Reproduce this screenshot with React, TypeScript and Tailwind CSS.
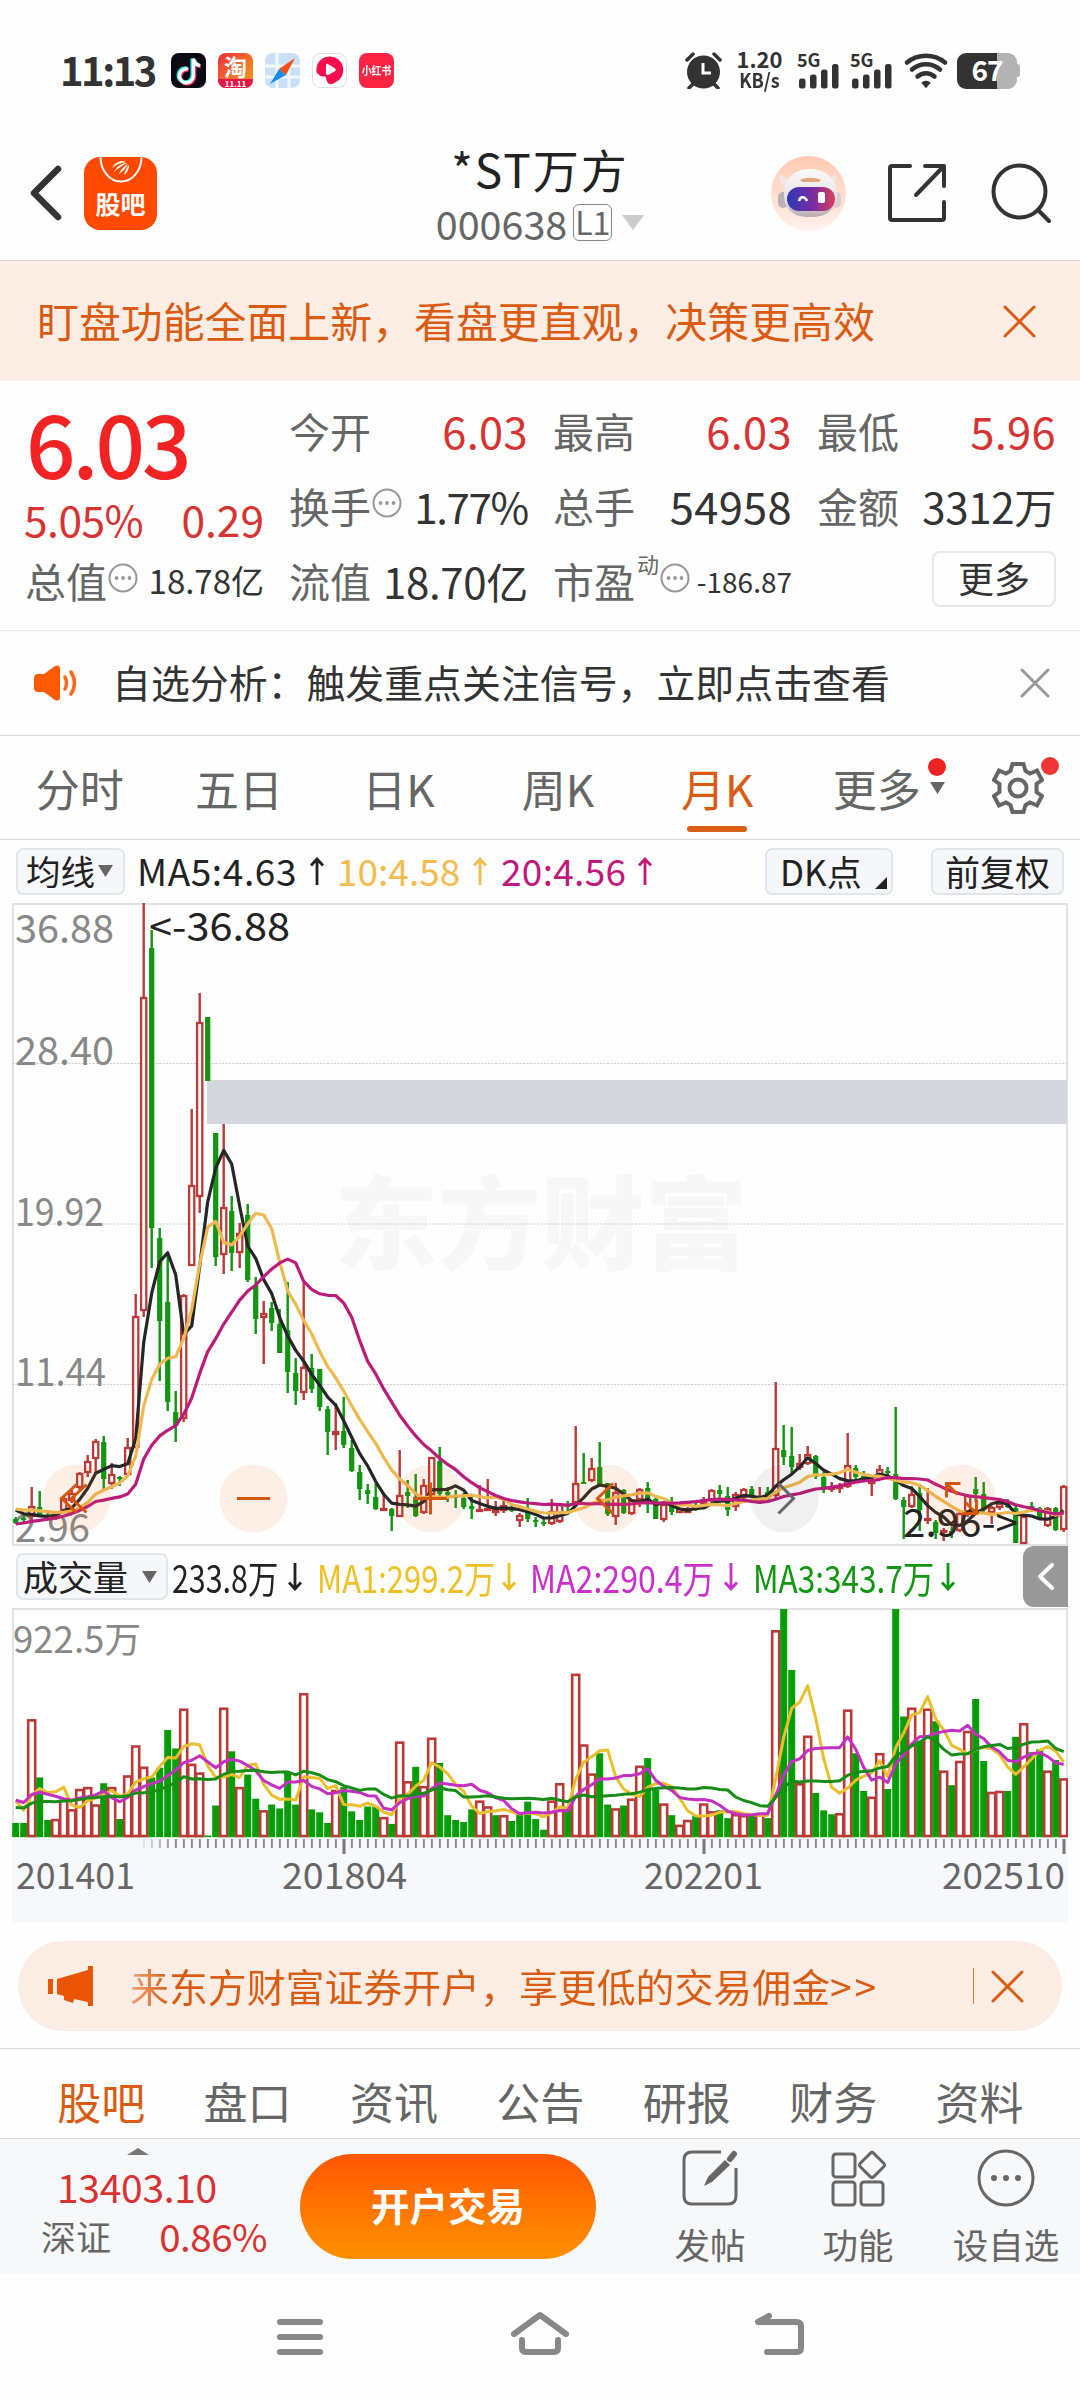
import type { ReactNode } from "react";

// [colour, high, body top, body bottom, low], in px from the top of the price pane
type Candle = ["r" | "g", number, number, number, number];

const candles: Candle[] = [
  ["g", 614, 616, 620, 621], ["g", 613, 615, 617, 619], ["r", 584, 603, 614, 617], ["g", 588, 604, 613, 614],
  ["g", 610, 612, 614, 616], ["r", 610, 613, 615, 617], ["r", 594, 595, 608, 610], ["r", 587, 590, 598, 600],
  ["r", 569, 570, 585, 587], ["r", 552, 558, 570, 574], ["r", 536, 538, 556, 570], ["g", 533, 539, 576, 586],
  ["r", 560, 571, 581, 586], ["g", 573, 574, 575, 583], ["r", 535, 544, 572, 574], ["r", 391, 413, 545, 545],
  ["r", 0, 94, 408, 414], ["g", 27, 45, 325, 365], ["g", 325, 335, 418, 478], ["g", 352, 399, 499, 508],
  ["g", 488, 509, 523, 539], ["r", 391, 392, 516, 519], ["r", 206, 282, 363, 363], ["r", 90, 119, 294, 310],
  ["g", 114, 114, 178, 178], ["g", 230, 230, 354, 363], ["r", 221, 304, 352, 371], ["g", 293, 308, 350, 368],
  ["r", 320, 330, 350, 365], ["g", 301, 312, 377, 379], ["g", 374, 382, 416, 431], ["r", 398, 410, 415, 461],
  ["g", 399, 405, 420, 428], ["g", 406, 421, 450, 450], ["g", 379, 427, 469, 490], ["g", 455, 470, 488, 502],
  ["r", 380, 464, 490, 497], ["g", 451, 465, 486, 490], ["g", 466, 466, 504, 508], ["g", 503, 506, 529, 552],
  ["r", 500, 528, 532, 547], ["g", 494, 528, 542, 545], ["g", 537, 545, 568, 569], ["g", 562, 569, 586, 597],
  ["g", 581, 587, 591, 601], ["g", 581, 594, 606, 607], ["r", 592, 605, 606, 608], ["g", 605, 606, 613, 628],
  ["r", 547, 592, 614, 614], ["g", 577, 589, 593, 605], ["g", 571, 594, 613, 614], ["r", 576, 582, 610, 611],
  ["r", 554, 554, 592, 594], ["g", 544, 558, 591, 594], ["g", 584, 589, 592, 599], ["g", 587, 592, 595, 605],
  ["g", 590, 595, 604, 606], ["g", 594, 603, 606, 616], ["r", 582, 606, 607, 608], ["r", 576, 605, 607, 608],
  ["r", 598, 606, 610, 613], ["r", 597, 602, 608, 610], ["g", 602, 604, 608, 609], ["r", 610, 612, 618, 624],
  ["g", 595, 605, 616, 619], ["g", 614, 617, 619, 624], ["g", 614, 619, 620, 623], ["r", 596, 608, 621, 622],
  ["r", 600, 601, 619, 620], ["g", 598, 602, 604, 609], ["r", 523, 580, 600, 600], ["g", 550, 579, 580, 580],
  ["r", 555, 565, 578, 579], ["g", 539, 564, 581, 582], ["g", 580, 580, 611, 613], ["r", 580, 589, 614, 622],
  ["g", 586, 587, 610, 611], ["r", 596, 597, 611, 612], ["r", 585, 586, 597, 604], ["g", 579, 585, 599, 610],
  ["g", 594, 596, 616, 616], ["r", 600, 601, 617, 619], ["g", 594, 599, 609, 612], ["r", 605, 605, 610, 610],
  ["r", 604, 605, 610, 610], ["g", 598, 602, 607, 608], ["r", 594, 599, 605, 606], ["r", 586, 587, 598, 599],
  ["g", 582, 587, 591, 600], ["g", 584, 593, 607, 613], ["r", 589, 591, 604, 608], ["r", 585, 586, 595, 596],
  ["g", 583, 586, 592, 594], ["r", 584, 597, 600, 601], ["g", 584, 589, 596, 598], ["r", 479, 545, 593, 596],
  ["g", 522, 547, 554, 562], ["g", 524, 553, 564, 570], ["r", 551, 560, 565, 567], ["r", 543, 551, 561, 562],
  ["g", 552, 553, 574, 576], ["g", 569, 574, 587, 590], ["r", 579, 584, 586, 589], ["r", 580, 582, 586, 590],
  ["r", 530, 562, 584, 585], ["g", 562, 565, 574, 577], ["g", 568, 573, 577, 579], ["r", 572, 577, 581, 593],
  ["r", 562, 566, 572, 573], ["g", 564, 568, 570, 573], ["g", 504, 571, 596, 597], ["g", 594, 597, 604, 636],
  ["r", 583, 591, 604, 605], ["g", 583, 590, 607, 628], ["r", 585, 615, 618, 621], ["g", 617, 619, 630, 636],
  ["r", 625, 627, 630, 638], ["g", 624, 628, 630, 635], ["r", 609, 610, 628, 629], ["r", 591, 592, 612, 614],
  ["g", 574, 586, 591, 599], ["g", 579, 591, 607, 609], ["r", 603, 604, 610, 621], ["r", 596, 600, 605, 607],
  ["g", 596, 599, 604, 605], ["g", 602, 605, 640, 640], ["r", 612, 613, 641, 641], ["g", 599, 603, 608, 609],
  ["g", 604, 605, 615, 617], ["r", 604, 605, 623, 624], ["g", 604, 605, 627, 628], ["r", 582, 583, 627, 629],
];

const volumes = [
  14, 14, 121, 61, 17, 18, 38, 28, 49, 51, 33, 55, 51, 18, 63, 94, 72, 61, 71, 110, 91, 132, 75, 66, 1, 32, 133, 88,
  51, 64, 39, 27, 33, 29, 66, 33, 148, 28, 25, 14, 48, 51, 26, 17, 31, 31, 20, 13, 98, 57, 72, 52, 102, 76, 22, 17,
  15, 28, 37, 31, 22, 22, 16, 25, 36, 18, 7, 37, 55, 29, 168, 95, 65, 86, 33, 29, 32, 39, 73, 81, 48, 34, 22, 12,
  17, 21, 34, 26, 27, 19, 23, 22, 22, 23, 19, 213, 235, 172, 55, 104, 45, 27, 23, 24, 131, 86, 47, 41, 86, 49, 235,
  124, 133, 99, 132, 119, 68, 53, 78, 109, 142, 78, 46, 47, 47, 103, 117, 87, 90, 68, 79, 60,
];

// volume bars are coloured by the previous close, so they can differ from the candle
const volumeColors =
  "ggrggrrrrrrgrgrrrggggrrrggrgrggrggggrgggrgggggrgrrgrrgggggrrgrgggggrrgrrrggrgrrggrgrrgrrggrrgrgrggrrgggrrggrrgggrgrgrgrrggrrggrggrgr";

// months before the visible window, so the averages start at the left edge
const closeHistory = [...Array(10).fill(636), ...Array(5).fill(605), 598, 600, 606, 611];
const volumeHistory = [...Array(10).fill(22.5), ...Array(5).fill(38), 64, 43, 26, 38];

const STEP = 8;
const barX = (i: number) => 3.7 + i * STEP;

function average(history: number[], values: number[], n: number) {
  const all = [...history, ...values];
  return values.map((_, i) => {
    const end = i + history.length + 1;
    return all.slice(end - n, end).reduce((a, b) => a + b, 0) / n;
  });
}

const toPoints = (ys: number[]) => ys.map((y, i) => `${barX(i)},${y.toFixed(1)}`).join(" ");

const closes = candles.map(([c, , top, bottom]) => (c === "r" ? top : bottom));
const volY = (v: number) => 228.5 - v * 0.968;

const RED = "#b93a38";
const GREEN = "#109610";

function Cross({ size, className, stroke = 3 }: { size: number; className: string; stroke?: number }) {
  return (
    <svg width={size} height={size} viewBox={`0 0 ${size} ${size}`} className={className} stroke="currentColor" strokeWidth={stroke} strokeLinecap="round">
      <path d={`M2 2L${size - 2} ${size - 2}M${size - 2} 2L2 ${size - 2}`} />
    </svg>
  );
}

function InfoDots() {
  return (
    <svg width="30" height="30" viewBox="0 0 30 30" className="shrink-0 -mt-[6px] ml-px">
      <circle cx="15" cy="15" r="13.5" fill="none" stroke="#999" strokeWidth="2" />
      <g fill="#999">
        <circle cx="8.5" cy="15" r="1.9" />
        <circle cx="15" cy="15" r="1.9" />
        <circle cx="21.5" cy="15" r="1.9" />
      </g>
    </svg>
  );
}

function Down({ w, h, className }: { w: number; h: number; className: string }) {
  return (
    <svg width={w} height={h} viewBox="0 0 10 10" preserveAspectRatio="none" className={className} fill="currentColor">
      <path d="M0 0H10L5 10Z" />
    </svg>
  );
}

function Arrow({ up = false, className }: { up?: boolean; className?: string }) {
  return (
    <svg width="14" height="28" viewBox="0 0 14 28" fill="none" stroke="currentColor" strokeWidth="2.800" className={className}>
      <path d={up ? "M7 28V2M1 8.5L7 2L13 8.5" : "M7 0V26M1 19.5L7 26L13 19.5"} />
    </svg>
  );
}

function Signal() {
  return (
    <div className="flex h-[37px] w-[44px] flex-col justify-between">
      <span className="text-[18px] leading-[14px] font-bold">5G</span>
      <svg width="41" height="25" viewBox="0 0 41 25" fill="#333" className="-mt-1 ml-[2px]">
        <rect x="0" y="14.500" width="6.500" height="10" rx="2.500" />
        <rect x="11" y="10.500" width="6.500" height="14" rx="2.500" />
        <rect x="22" y="5.500" width="6.500" height="19" rx="2.500" />
        <rect x="33" y="0" width="6.500" height="24.500" rx="2.500" />
      </svg>
    </div>
  );
}

function StatusBar() {
  return (
    <div className="flex h-[126px] items-center pt-[15px] pr-[60px] pl-[60px] text-[#333]">
      <span className="w-[111px] text-[40px] leading-none font-bold tracking-[-2.500px] -mt-1">11:13</span>
      <div className="flex items-center gap-[12px]">
        <svg width="35" height="35" viewBox="0 0 35 35">
          <rect width="35" height="35" rx="8" fill="#0b0a14" />
          <g fill="none" strokeWidth="4">
            <path d="M17 16a7 7 0 1 0 5.500 7V6c1 4 3 6 6.500 6.500" stroke="#fe2c55" transform="translate(.8 .8)" />
            <path d="M17 16a7 7 0 1 0 5.500 7V6c1 4 3 6 6.500 6.500" stroke="#25f4ee" transform="translate(-1 -.6)" />
            <path d="M17 16a7 7 0 1 0 5.500 7V6c1 4 3 6 6.500 6.500" stroke="#fff" strokeWidth="3.200" />
          </g>
        </svg>
        <div className="flex h-[35px] w-[35px] flex-col items-center rounded-[8px] bg-linear-to-br from-[#e8243c] via-[#f06a28] to-[#f5a01c] text-white">
          <span className="text-[23px] leading-[26px] font-bold">淘</span>
          <span className="w-full rounded-b-[8px] bg-[#e5174a] text-center text-[8px] leading-[9px] font-bold">11.11</span>
        </div>
        <svg width="35" height="35" viewBox="0 0 35 35">
          <rect width="35" height="35" rx="8" fill="#c9e0f8" />
          <path d="M12 0V35M0 13H35M24 14V35M0 24H35" stroke="#f3f8fe" strokeWidth="3" />
          <path d="M30 5L14 16L21 22Z" fill="#f4511e" />
          <path d="M5 31L14 16L21 22Z" fill="#1b8df0" />
        </svg>
        <svg width="35" height="35" viewBox="0 0 35 35">
          <rect x=".5" y=".5" width="34" height="34" rx="8" fill="#fff" stroke="#ddd" />
          <path d="M18 3.500a13.500 13.500 0 0 1 5 26c-3 2.500-7 2-8-1l-1.500-5C8 24 3.500 21 4.500 15 5.500 8 11 3.500 18 3.500Z" fill="#f80e4c" />
          <path d="M14 12.500c0-1.500 1-2 2-1.500l7 4.500c1 .8 1 2 0 2.700L16 22c-1 .5-2 0-2-1.500Z" fill="#fff" />
        </svg>
        <div className="flex h-[35px] w-[35px] items-center justify-center rounded-[8px] bg-[#fb2442]">
          <span className="scale-x-90 text-[11px] leading-none font-bold whitespace-nowrap text-white">小红书</span>
        </div>
      </div>
      <div className="ml-auto flex items-center">
        <svg width="37" height="37" viewBox="0 0 37 37" className="mr-[14px]">
          <circle cx="18.500" cy="20" r="16.500" fill="#333" />
          <path d="M2 8L8 2M35 8L29 2M4 36L8 32M33 36L29 32" stroke="#333" strokeWidth="3.500" strokeLinecap="round" />
          <path d="M18 11V21H26" stroke="#fff" strokeWidth="3" fill="none" />
        </svg>
        <div className="flex w-[47px] flex-col items-center text-[22px] leading-[21px] font-bold">
          <span className="-mt-1">1.20</span>
          <span className="scale-x-90 text-[20px]">KB/s</span>
        </div>
        <div className="ml-[14px] flex gap-[9px]">
          <Signal />
          <Signal />
        </div>
        <svg width="44" height="36" viewBox="0 0 44 36" className="ml-[10px]" fill="none" stroke="#333" strokeWidth="4.500" strokeLinecap="round">
          <path d="M3 9.500C14 .5 30 .5 41 9.500" />
          <path d="M8 16.500C16 9.500 28 9.500 36 16.500" />
          <path d="M13.500 23.500C18.500 19 25.500 19 30.500 23.500" />
          <path d="M19.500 30C21 29 23 29 24.500 30L22 33Z" fill="#333" strokeWidth="3" />
        </svg>
        <div className="ml-[9px] flex items-center">
          <div className="flex h-[36px] w-[60px] items-center justify-center rounded-[9px] bg-linear-to-r from-[#333] from-66% to-[#b3b3b3] to-66%">
            <span className="text-[28px] leading-none font-bold tracking-[-1px] text-white -mt-1">67</span>
          </div>
          <div className="h-[13px] w-[3px] rounded-r bg-[#b3b3b3]" />
        </div>
      </div>
    </div>
  );
}

function Header() {
  return (
    <header className="grid h-[135px] grid-cols-[1fr_auto_1fr] items-center border-b border-[#d5d5d8]">
      <div className="flex items-center pl-[30px]">
        <svg width="32" height="56" viewBox="0 0 32 56" fill="none" stroke="#333" strokeWidth="6.500" strokeLinecap="round" strokeLinejoin="round">
          <path d="M28 4L4 28L28 52" />
        </svg>
        <div className="relative ml-[22px] flex h-[73px] w-[73px] items-end justify-center overflow-hidden rounded-[16px] bg-[#ff4800] pb-[14px]">
          <svg width="44" height="27" viewBox="0 0 44 27" className="absolute top-0 left-[15px]">
            <path d="M1.500 0a20 24 0 0 0 41 0" fill="none" stroke="#fff" strokeWidth="2" />
            <path d="M13 11C17 4 23 3 27 5C20 6 17 8 13 11ZM15 15C18 9 23 6 28 6C23 9 19 11 15 15ZM20 17C22 12 25 9 29 7C27 11 24 14 20 17ZM25 18C26 14 28 10 30 8C30 12 28 16 25 18Z" fill="#fff" />
          </svg>
          <span className="text-[25px] leading-none font-bold text-white">股吧</span>
        </div>
      </div>
      <div className="flex flex-col items-center pt-[3px]">
        <h1 className="text-[46px] leading-[56px] tracking-[2px] text-[#222]">*ST万方</h1>
        <div className="flex items-center text-[#666]">
          <span className="text-[39.500px] leading-[54px]">000638</span>
          <span className="ml-[6px] flex h-[37px] w-[39px] items-center justify-center rounded-[6px] border border-[#888] pb-1 text-[32px] leading-none">L1</span>
          <Down w={22} h={15} className="ml-[10px] text-[#ccc]" />
        </div>
      </div>
      <div className="flex items-center justify-end pr-[29px]">
        <svg width="75" height="75" viewBox="0 0 75 75" className="mr-[42px]">
          <defs>
            <linearGradient id="halo" x1="0" y1="0" x2="0" y2="1">
              <stop offset="0" stopColor="#ffc9b0" />
              <stop offset="1" stopColor="#fff2ec" />
            </linearGradient>
            <linearGradient id="visor" x1="0" y1="0" x2="1" y2="0">
              <stop offset="0" stopColor="#3038b8" />
              <stop offset=".55" stopColor="#7a2ca0" />
              <stop offset="1" stopColor="#d8405c" />
            </linearGradient>
            <linearGradient id="helmet" x1="0" y1="0" x2="0" y2="1">
              <stop offset="0" stopColor="#fbf9fa" />
              <stop offset=".7" stopColor="#e6dfe2" />
              <stop offset="1" stopColor="#b5a8b0" />
            </linearGradient>
          </defs>
          <circle cx="37.500" cy="37.500" r="37.500" fill="url(#halo)" />
          <path d="M9 17C8 24 10 30 16 32L22 23C16 24 12 21 9 17ZM64 17C66 24 64 30 58 32L52 23C58 24 62 21 64 17Z" fill="#eee8ea" />
          <rect x="7" y="36" width="10" height="16" rx="5" fill="#b9b0b8" />
          <rect x="61" y="36" width="9" height="16" rx="5" fill="#d9cdd0" />
          <path d="M13 38C13 20 26 13 39 13C54 13 66 23 66 38C66 54 56 61 39 61C22 61 13 54 13 38Z" fill="url(#helmet)" />
          <path d="M29 24C35 21 44 21 50 24L48 26H31Z" fill="#dfa77c" />
          <rect x="16" y="31" width="48" height="24" rx="12" fill="url(#visor)" />
          <path d="M28 45C29 40 34 40 36 45" fill="none" stroke="#fff" strokeWidth="2.500" />
          <rect x="47" y="36" width="7" height="11" rx="2" fill="#fff" />
        </svg>
        <svg width="58" height="58" viewBox="0 0 58 58" className="mr-[45px]" fill="none" stroke="#333" strokeWidth="4" strokeLinecap="round" strokeLinejoin="round">
          <path d="M22 2H4Q2 2 2 4V54Q2 56 4 56H54Q56 56 56 54V38" />
          <path d="M37 2H56V22M55 3L28 31" />
        </svg>
        <svg width="60" height="60" viewBox="0 0 60 60" fill="none" stroke="#333" strokeWidth="4" strokeLinecap="round">
          <circle cx="28.500" cy="28.500" r="26" />
          <path d="M47 47L58 58" />
        </svg>
      </div>
    </header>
  );
}

function Stat({ label, value, up, info, size }: { label: ReactNode; value: string; up?: boolean; info?: boolean; size?: string }) {
  return (
    <div className="flex h-[75px] items-center whitespace-nowrap">
      <span className="-ml-px text-[41px] text-[#666]">{label}</span>
      {info && <InfoDots />}
      <span className={`ml-auto ${size ?? "text-[43.500px] tracking-[0.300px]"} ${up ? "text-[#d63333]" : "text-[#333]"}`}>{value}</span>
    </div>
  );
}

function Quote() {
  return (
    <section className="grid h-[250px] grid-cols-[repeat(4,238px)] gap-x-[26px] border-b border-[#ececee] pt-[12px] pl-[26px] leading-none">
      <div>
        <div className="h-[102px] text-[87px] leading-[96px] font-medium tracking-[-3px] text-[#f32323]">6.03</div>
        <div className="-ml-[2px] flex h-[48px] items-center justify-between text-[42.500px] text-[#d63333]">
          <span className="tracking-[-0.500px]">5.05%</span>
          <span>0.29</span>
        </div>
        <Stat label="总值" value="18.78亿" info size="text-[33px]" />
      </div>
      <div>
        <Stat label="今开" value="6.03" up />
        <Stat label="换手" value="1.77%" info size="text-[42px] tracking-[-1.300px]" />
        <Stat label="流值" value="18.70亿" size="text-[42px] tracking-[-0.300px]" />
      </div>
      <div>
        <Stat label="最高" value="6.03" up />
        <Stat label="总手" value="54958" />
        <Stat label={<>市盈<sup className="relative -top-[25px] ml-[2px] text-[22px]">动</sup></>} value="-186.87" info size="text-[28px]" />
      </div>
      <div>
        <Stat label="最低" value="5.96" up />
        <Stat label="金额" value="3312万" size="text-[42px] tracking-[-0.300px]" />
        <div className="flex h-[72px] items-center justify-end">
          <button className="h-[56px] w-[124px] rounded-[8px] border-2 border-[#e6e8eb] pb-1 text-[36px] leading-none text-[#333]">更多</button>
        </div>
      </div>
    </section>
  );
}

function PeriodTabs() {
  return (
    <nav className="flex h-[104px] border-b border-[#d8d8da] text-[44px] leading-none text-[#666]">
      {["分时", "五日", "日K", "周K", "月K", "更多"].map((tab) => (
        <div key={tab} className={tab === "月K" ? "relative w-[159.400px] pt-[30px] text-center text-[#d95c12]" : "relative w-[159.400px] pt-[30px] text-center"}>
          {tab}
          {tab === "月K" && <span className="absolute bottom-[7px] left-[49px] h-[6px] w-[60px] rounded-full bg-[#d95f16]" />}
          {tab === "更多" && (
            <>
              <span className="absolute top-[22px] left-[131px] h-[18px] w-[18px] rounded-full bg-[#f02323]" />
              <Down w={15} h={12} className="absolute top-[46px] left-[133px]" />
            </>
          )}
        </div>
      ))}
      <div className="relative flex-1">
        <svg width="52" height="54" viewBox="-26 -27 52 54" className="absolute top-[25px] left-[36px]" fill="none" stroke="#666" strokeWidth="4" strokeLinejoin="miter">
          <path d="M-5.500 -24H5.500L7.500 -17L12 -14.500L19 -17.500L24 -8L18.500 -4V4L24 8L19 17.500L12 14.500L7.500 17L5.500 24H-5.500L-7.500 17L-12 14.500L-19 17.500L-24 8L-18.500 4V-4L-24 -8L-19 -17.500L-12 -14.500L-7.500 -17Z" />
          <circle r="8.500" />
        </svg>
        <span className="absolute top-[21px] left-[85px] h-[18px] w-[18px] rounded-full bg-[#f23535]" />
      </div>
    </nav>
  );
}

const chip = "flex h-[47px] shrink-0 items-center rounded-[7px] border-2 border-[#e2e5ea] bg-[#f6f7fa] text-[#222]";

function MaLegend() {
  return (
    <div className="flex h-[63px] items-center pb-px pl-[16px] text-[37px] leading-none text-[#222]">
      <div className={`${chip} w-[109px] pl-[8px]`}>
        <span className="-mt-[2px] text-[34.500px]">均线</span>
        <Down w={15} h={12} className="ml-[3px] text-[#666]" />
      </div>
      <span className="-mt-[2px] ml-[12px] w-[173px] tracking-[0.600px]">MA5:4.63</span>
      <Arrow up className="mr-[13px]" />
      <span className="-mt-[2px] w-[136px] text-[#f3bc50]">10:4.58</span>
      <Arrow up className="mr-[14px] text-[#f3bc50]" />
      <span className="-mt-[2px] w-[137px] tracking-[0.300px] text-[#c0187c]">20:4.56</span>
      <Arrow up className="text-[#c0187c]" />
      <div className={`${chip} relative ml-[113px] w-[128px] pl-[13px]`}>
        <span className="-mt-[2px] text-[35px]">DK点</span>
        <svg width="12" height="12" viewBox="0 0 12 12" className="absolute right-[4px] bottom-[4px]">
          <path d="M12 0V12H0Z" fill="#222" />
        </svg>
      </div>
      <div className={`${chip} ml-[38px] w-[133px] justify-center`}>
        <span className="-mt-[2px] text-[35px]">前复权</span>
      </div>
    </div>
  );
}

function ChartButton({ children, muted }: { children: ReactNode; muted?: boolean }) {
  return (
    <svg width="69" height="69" viewBox="-34.5 -34.5 69 69" fill="none" stroke={muted ? "#666" : "#d4560f"} strokeWidth="3">
      <circle r="34" fill={muted ? "#333" : "#fa6414"} fillOpacity={muted ? 0.07 : 0.1} stroke="none" />
      {children}
    </svg>
  );
}

function PriceChart() {
  const labels: [string, number, number][] = [
    ["36.88", 39.5, 99],
    ["28.40", 162, 99],
    ["19.92", 322.5, 89],
    ["11.44", 483, 91],
    ["2.96", 639, 75],
  ];
  return (
    <div className="relative mx-[12px] h-[642px]">
      <svg width="1056" height="642" viewBox="0 0 1056 642" className="block overflow-visible">
        <rect x="1" y="1" width="1054" height="641" fill="none" stroke="#e2e2e5" strokeWidth="2" />
        <text x="322" y="359" fontSize="102" fontWeight="900" fill="#f7f7f8" textLength="414" lengthAdjust="spacingAndGlyphs">东方财富</text>
        <path d="M0 160.500H1056M0 321H1056M0 481.500H1056" stroke="#ccc" strokeDasharray="2 1.500" />
        <rect x="195" y="177" width="860" height="44" fill="#d4d7dc" />
        {labels.map(([t, y, w]) => (
          <text key={t} x="3" y={y} fontSize="39.500" fill="#888" textLength={w} lengthAdjust="spacingAndGlyphs">{t}</text>
        ))}
        {candles.map(([c, high, top, bottom, low], i) => {
          const x = barX(i);
          const h = Math.max(bottom - top, 2);
          return c === "g" ? (
            <g key={i} fill={GREEN}>
              <rect x={x - 1.2} y={high} width="2.4" height={low - high} />
              <rect x={x - 2.6} y={top} width="5.2" height={h} />
            </g>
          ) : (
            <g key={i} fill={RED}>
              <rect x={x - 1.2} y={high} width="2.4" height={top - high} />
              <rect x={x - 1.2} y={bottom} width="2.4" height={low - bottom} />
              <rect x={x - 2.6} y={top + 1} width="5.2" height={Math.max(h - 2, 1)} fill="#fff" fillOpacity=".8" stroke={RED} strokeWidth="2.300" />
            </g>
          );
        })}
        <g fill="none" strokeWidth="3.200" strokeLinejoin="round">
          <polyline points={toPoints(average(closeHistory, closes, 5))} stroke="#262626" />
          <polyline points={toPoints(average(closeHistory, closes, 10))} stroke="#f0b950" />
          <polyline points={toPoints(average(closeHistory, closes, 20))} stroke="#bb1c7c" />
        </g>
        <g fontSize="39" fill="#222">
          <text x="137" y="37.500" textLength="141" lengthAdjust="spacingAndGlyphs">&lt;-36.88</text>
          <text x="891" y="634" textLength="115" lengthAdjust="spacingAndGlyphs">2.96-&gt;</text>
        </g>
      </svg>
      <div className="absolute top-[561px] left-[30px] flex gap-[108px]">
        <ChartButton>
          <path d="M0 -14L-15 0L0 14M10 -14L-5 0L10 14" />
        </ChartButton>
        <ChartButton>
          <path d="M-16.500 0H16.500" />
        </ChartButton>
        <ChartButton>
          <path d="M-16.500 0H16.500M0 -16V16" />
        </ChartButton>
        <ChartButton>
          <path d="M5.500 -15L-10 0L5.500 15" />
        </ChartButton>
        <ChartButton muted>
          <path d="M-6 -15L9 0L-6 15" />
        </ChartButton>
        <ChartButton>
          <path d="M-1 -15H-15V-1M-15 -15L-4 -4M15 1V15H1M15 15L4 4" />
        </ChartButton>
      </div>
    </div>
  );
}

function VolumeLegend() {
  return (
    <div className="flex h-[63px] items-center pl-[16px] text-[38px] leading-none text-[#222]">
      <div className={`${chip} w-[152px] pl-[5px]`}>
        <span className="-mt-[2px] text-[35px]">成交量</span>
        <Down w={15} h={12} className="ml-[14px] text-[#666]" />
      </div>
      <span className="ml-[4px] w-[116px]"><span className="-mt-[3px] inline-block origin-left scale-x-[.8] whitespace-nowrap">233.8万</span></span>
      <Arrow />
      <span className="ml-[15px] w-[185px] text-[#f0c022]"><span className="-mt-[3px] inline-block origin-left scale-x-[.815] whitespace-nowrap">MA1:299.2万</span></span>
      <Arrow className="text-[#f0c022]" />
      <span className="ml-[14px] w-[194px] text-[#cb2fcb]"><span className="-mt-[3px] inline-block origin-left scale-x-[.845] whitespace-nowrap">MA2:290.4万</span></span>
      <Arrow className="text-[#cb2fcb]" />
      <span className="ml-[15px] w-[188px] text-[#109610]"><span className="-mt-[3px] inline-block origin-left scale-x-[.83] whitespace-nowrap">MA3:343.7万</span></span>
      <Arrow className="text-[#109610]" />
      <div className="mr-[12px] ml-auto flex h-[61px] w-[45px] items-center justify-center rounded-l-[11px] bg-[#999]">
        <svg width="18" height="29" viewBox="0 0 18 29" fill="none" stroke="#fff" strokeWidth="4" strokeLinecap="round" strokeLinejoin="round">
          <path d="M15 3L3 14.500L15 26" />
        </svg>
      </div>
    </div>
  );
}

function VolumeChart() {
  const vma = (n: number) => toPoints(average(volumeHistory, volumes, n).map(volY));
  return (
    <div className="mx-[12px] h-[315px] bg-linear-to-b from-white from-[231px] to-[#f7f8fb] to-[231px]">
      <svg width="1056" height="315" viewBox="0 0 1056 315" className="block">
        <path d="M1 230V1H1055V230" fill="none" stroke="#e2e2e5" strokeWidth="2" />
        <path d="M0 229.500H1056" stroke="#d4ecd4" />
        <text x="1" y="44.500" fontSize="36.500" fill="#888" textLength="128" lengthAdjust="spacingAndGlyphs">922.5万</text>
        {volumes.map((v, i) => {
          const y = volY(v);
          return volumeColors[i] === "g" ? (
            <rect key={i} x={barX(i) - 3.5} y={y} width="7" height={229 - y} fill="#069c06" />
          ) : (
            <rect key={i} x={barX(i) - 3.5} y={y + 1} width="7" height={227 - y} fill="#fff" stroke={RED} strokeWidth="2.600" />
          );
        })}
        <g fill="none" strokeWidth="3" strokeLinejoin="round">
          <polyline points={vma(5)} stroke="#e9c02c" />
          <polyline points={vma(10)} stroke="#c42fc4" />
          <polyline points={vma(20)} stroke="#178c17" />
        </g>
        {Array.from({ length: 116 }, (_, k) => {
          const i = k + 16;
          const major = i === 41 || i === 86 || i === 131;
          return (
            <rect key={i} x={barX(i) - (major ? 1.2 : 0.8)} y="231" width={major ? 3 : 2} height={major ? 15 : 9} fill={major ? "#777" : "#8c8c8c"} opacity={Math.min(1, (k + 1) / 5)} />
          );
        })}
        <g fontSize="36.500" fill="#666">
          <text x="4" y="280.500" textLength="119" lengthAdjust="spacingAndGlyphs">201401</text>
          <text x="270" y="280.500" textLength="125" lengthAdjust="spacingAndGlyphs">201804</text>
          <text x="632" y="280.500" textLength="119" lengthAdjust="spacingAndGlyphs">202201</text>
          <text x="930" y="280.500" textLength="123" lengthAdjust="spacingAndGlyphs">202510</text>
        </g>
      </svg>
    </div>
  );
}

function OpenAccountStrip() {
  return (
    <div className="mx-[18px] mt-[18px] flex h-[90px] items-center rounded-full bg-[#fcede4] pr-[38px] pl-[30px] text-[#d95c12]">
      <svg width="46" height="40" viewBox="0 0 46 40" fill="#ea5504">
        <path d="M0 13H5V28H0ZM9 13L40 4V0H45V40H40V36L26 33L25 37L16 34V30L9 28Z" />
      </svg>
      <span className="-mt-[3px] ml-[36px] bg-linear-to-r from-[#d95c12]/50 to-[#d95c12] to-[40px] bg-clip-text text-[38.900px] leading-[50px] whitespace-nowrap text-transparent">
        来东方财富证券开户，享更低的交易佣金<span className="tracking-[3px]">&gt;&gt;</span>
      </span>
      <span className="ml-auto h-[36px] w-[1.500px] bg-[#d97a44]" />
      <Cross size={33} className="ml-[17px]" />
    </div>
  );
}

function InfoTabs() {
  return (
    <nav className="mt-[17px] flex h-[91px] border-y border-[#d8d8da] pl-[28px] text-[44px] leading-none text-[#666]">
      {["股吧", "盘口", "资讯", "公告", "研报", "财务", "资料"].map((tab, i) => (
        <span key={tab} className={i === 0 ? "w-[146.400px] pt-[29.500px] text-center text-[#d95c12]" : "w-[146.400px] pt-[29.500px] text-center"}>{tab}</span>
      ))}
    </nav>
  );
}

function Action({ label, children }: { label: string; children: ReactNode }) {
  return (
    <div className="flex w-[148px] flex-col items-center pt-[10px] text-[35.500px] leading-none text-[#666]">
      <svg width="58" height="58" viewBox="0 0 58 58" fill="none" stroke="#666" strokeWidth="3">
        {children}
      </svg>
      <span className="mt-[19px]">{label}</span>
    </div>
  );
}

function BottomBar() {
  return (
    <footer className="flex h-[135px] bg-[#f7f8fa]">
      <div className="flex w-[300px] flex-col pt-[9px] pl-[42px] leading-none">
        <svg width="22" height="7" viewBox="0 0 22 7" className="ml-[85px]">
          <path d="M0 7L11 0L22 7Z" fill="#777" />
        </svg>
        <span className="mt-[12px] ml-[15px] text-[39px] tracking-[-0.300px] text-[#d63333]">13403.10</span>
        <div className="mt-[10px] -ml-px flex w-[226px] items-center justify-between text-[#d63333]">
          <span className="text-[35px] text-[#666]">深证</span>
          <span className="text-[38.500px] tracking-[-0.500px]">0.86%</span>
        </div>
      </div>
      <button className="mt-[15px] h-[105px] w-[296px] rounded-full bg-linear-to-b from-[#ff5500] to-[#ff9000] pb-[3px] text-[38.500px] font-bold text-white">开户交易</button>
      <div className="ml-[40px] flex">
        <Action label="发帖">
          <path d="M40 3H11Q3 3 3 11V47Q3 55 11 55H47Q55 55 55 47V19" />
          <path d="M23 37L27 28L44 11L49 16L31 33Z" fill="#666" stroke="none" />
          <path d="M49 10L53 5" strokeWidth="6" strokeLinecap="round" />
        </Action>
        <Action label="功能">
          <rect x="4" y="5" width="22" height="23" rx="3" />
          <rect x="4" y="33" width="22" height="23" rx="3" />
          <rect x="32" y="33" width="22" height="23" rx="3" />
          <rect x="33.500" y="6.500" width="19" height="19" rx="2.500" transform="rotate(45 43 16)" />
        </Action>
        <Action label="设自选">
          <circle cx="29" cy="29" r="27" />
          <g fill="#666" stroke="none">
            <circle cx="17" cy="29" r="3" />
            <circle cx="29" cy="29" r="3" />
            <circle cx="41" cy="29" r="3" />
          </g>
        </Action>
      </div>
    </footer>
  );
}

function SystemNav() {
  return (
    <div className="flex h-[126px] justify-center gap-[182px] pt-[37px]">
      <svg width="58" height="46" viewBox="0 0 58 46" stroke="#888" strokeWidth="6" strokeLinecap="round">
        <path d="M9 11H49M9 26H49M9 41H49" />
      </svg>
      <svg width="58" height="46" viewBox="0 0 58 46" fill="none" stroke="#888" strokeWidth="6" strokeLinecap="round" strokeLinejoin="round">
        <path d="M3 23L29 4L55 23M11 29V37Q11 41 15 41H43Q47 41 47 37V29" />
      </svg>
      <svg width="58" height="46" viewBox="0 0 58 46" fill="none" stroke="#888" strokeWidth="6" strokeLinecap="round" strokeLinejoin="round">
        <path d="M18 5L7 11H45Q50 11 50 15V37Q50 41 46 41H16" />
      </svg>
    </div>
  );
}

export default function App() {
  return (
    <main className="h-[2400px] w-[1080px] overflow-hidden bg-[#fefefe] font-['Noto_Sans_CJK_SC','Noto_Sans',sans-serif]">
      <StatusBar />
      <Header />

      <div className="flex h-[120px] items-center bg-[#fcede4] pr-[44px] pl-[37px] text-[#d95c12]">
        <span className="-mt-[2px] text-[41.900px] leading-none">盯盘功能全面上新，看盘更直观，决策更高效</span>
        <Cross size={33} className="ml-auto" />
      </div>

      <Quote />

      <div className="flex h-[105px] items-center border-b border-[#d8d8da] pr-[30px] pl-[34px]">
        <svg width="44" height="36" viewBox="0 0 44 36">
          <path d="M0 13Q0 9 4 9H10L21 1Q26 -1 26 4V32Q26 37 21 35L10 27H4Q0 27 0 23Z" fill="#ff5a00" />
          <path d="M31 12Q34 18 31 24M37 7Q44 18 37 29" fill="none" stroke="#ff6a1a" strokeWidth="3.500" strokeLinecap="round" />
        </svg>
        <span className="-mt-[3px] ml-[34px] text-[38.900px] leading-none text-[#333]">自选分析：触发重点关注信号，立即点击查看</span>
        <Cross size={30} className="ml-auto text-[#999]" />
      </div>

      <PeriodTabs />
      <MaLegend />
      <PriceChart />
      <VolumeLegend />
      <VolumeChart />
      <OpenAccountStrip />
      <InfoTabs />
      <BottomBar />
      <SystemNav />
    </main>
  );
}
